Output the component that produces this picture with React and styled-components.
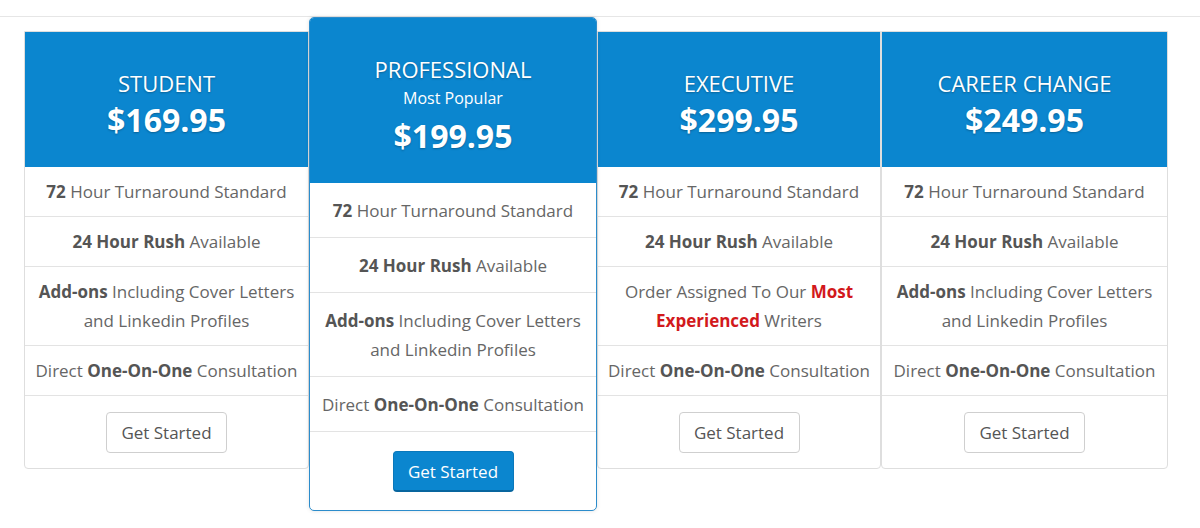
import React from "react";
import styled, { createGlobalStyle, css } from "styled-components";

const GlobalStyle = createGlobalStyle`
  html, body { margin: 0; padding: 0; background: #ffffff; }
  body { font-family: "Open Sans", "Noto Sans", Arial, sans-serif; }
  * { box-sizing: border-box; }
`;

const Page = styled.div`
  width: 1200px;
  height: 528px;
  background: #fff;
  overflow: hidden;
`;

const TopBar = styled.div`
  height: 17px;
  border-bottom: 1px solid #e6e6e6;
`;

const Plans = styled.div`
  display: grid;
  grid-template-columns: 285px 288px 284px 287px;
  align-items: start;
  padding-left: 24px;
`;

const Card = styled.div`
  position: relative;
  background: #fff;
  border: 1px solid #dedede;
  border-radius: 0 0 4px 4px;
  margin-top: 14px;
  ${(p) =>
    p.$featured &&
    css`
      margin-top: 0;
      border-color: #2c8ccb;
      border-radius: 5px;
      z-index: 2;
      box-shadow: 0 0 4px rgba(0, 0, 0, 0.12);
      overflow: hidden;
    `}
`;

const Header = styled.div`
  background: #0b86cf;
  color: #fff;
  text-align: center;
  padding: ${(p) => (p.$featured ? "36px 10px 27px" : "36px 10px 27px")};
  text-shadow: 0 1px 2px rgba(0, 0, 0, 0.28);
`;

const PlanName = styled.div`
  font-size: 22px;
  line-height: 30px;
  font-weight: 400;
  text-transform: uppercase;
`;

const Tagline = styled.div`
  font-size: 16px;
  line-height: 22px;
  margin-top: 3px;
  text-shadow: none;
`;

const Price = styled.div`
  font-size: 32px;
  line-height: 40px;
  font-weight: 700;
  margin-top: ${(p) => (p.$featured ? "7px" : "2px")};
`;

const Feature = styled.div`
  text-align: center;
  color: #666;
  font-size: 17px;
  line-height: 29px;
  padding: ${(p) => (p.$featured ? "13px 6px 12px" : "10px 6px")};
  border-bottom: 1px solid #e3e3e3;

  b {
    color: #555;
    font-weight: 700;
  }
`;

const Highlight = styled.b`
  && {
    color: #d2191c;
  }
`;

const ButtonRow = styled.div`
  display: flex;
  justify-content: center;
  padding: ${(p) => (p.$featured ? "19px 0 18px" : "16px 0 15px")};
`;

const Button = styled.button`
  width: 121px;
  height: 41px;
  font-family: inherit;
  font-size: 17px;
  border-radius: 4px;
  cursor: pointer;
  ${(p) =>
    p.$primary
      ? css`
          background: #0b86cf;
          color: #fff;
          border: 1px solid #0a78bb;
          border-bottom: 2px solid #08659e;
        `
      : css`
          background: #fff;
          color: #555;
          border: 1px solid #cfcfcf;
        `}
`;

const plans = [
  {
    name: "Student",
    price: "$169.95",
    third: (
      <>
        <b>Add-ons</b> Including Cover Letters and Linkedin Profiles
      </>
    ),
  },
  {
    name: "Professional",
    tagline: "Most Popular",
    price: "$199.95",
    featured: true,
    third: (
      <>
        <b>Add-ons</b> Including Cover Letters and Linkedin Profiles
      </>
    ),
  },
  {
    name: "Executive",
    price: "$299.95",
    third: (
      <>
        Order Assigned To Our <Highlight>Most Experienced</Highlight> Writers
      </>
    ),
  },
  {
    name: "Career Change",
    price: "$249.95",
    third: (
      <>
        <b>Add-ons</b> Including Cover Letters and Linkedin Profiles
      </>
    ),
  },
];

function PlanCard({ plan }) {
  const f = plan.featured;
  return (
    <Card $featured={f}>
      <Header $featured={f}>
        <PlanName>{plan.name}</PlanName>
        {plan.tagline && <Tagline>{plan.tagline}</Tagline>}
        <Price $featured={f}>{plan.price}</Price>
      </Header>
      <Feature $featured={f}>
        <b>72</b> Hour Turnaround Standard
      </Feature>
      <Feature $featured={f}>
        <b>24 Hour Rush</b> Available
      </Feature>
      <Feature $featured={f}>{plan.third}</Feature>
      <Feature $featured={f}>
        Direct <b>One-On-One</b> Consultation
      </Feature>
      <ButtonRow $featured={f}>
        <Button $primary={f}>Get Started</Button>
      </ButtonRow>
    </Card>
  );
}

export default function App() {
  return (
    <Page>
      <GlobalStyle />
      <TopBar />
      <Plans>
        {plans.map((p) => (
          <PlanCard key={p.name} plan={p} />
        ))}
      </Plans>
    </Page>
  );
}
